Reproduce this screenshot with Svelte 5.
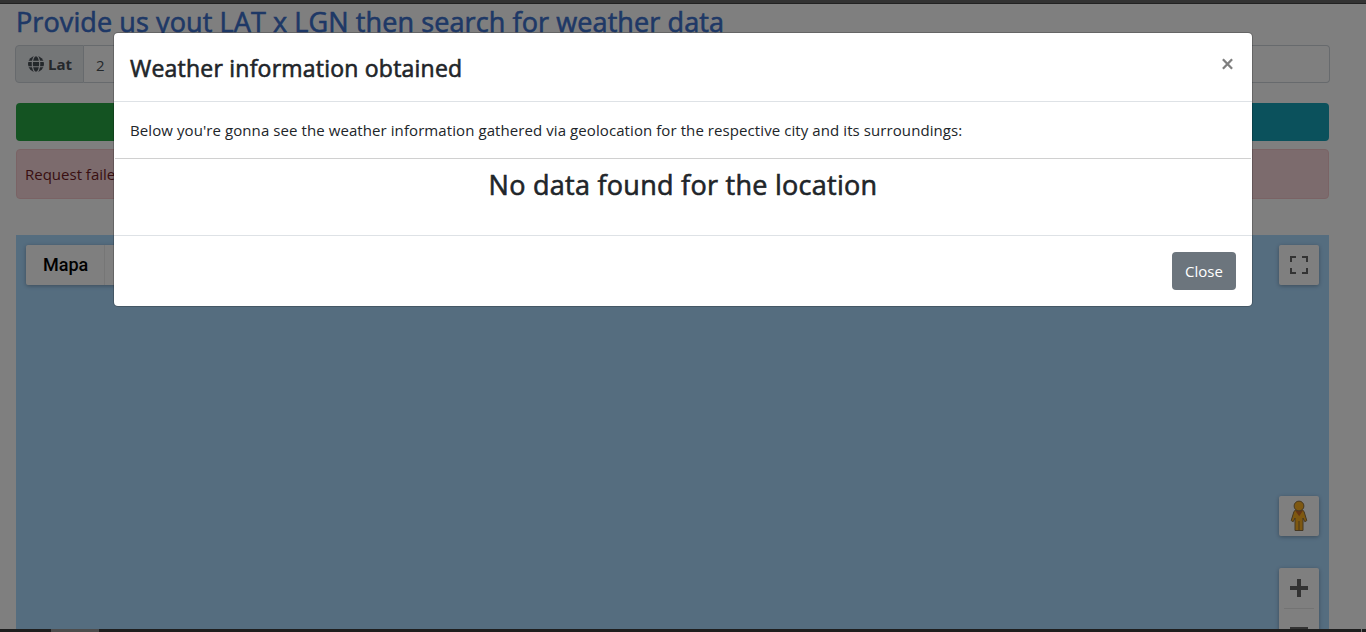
<script>
  const columns = ['search', 'locate'];
</script>

<main class="page">
  <div class="top-edge"></div>
  <section class="content">
    <h1><span>Provide us yout LAT x LGN then search for weather data</span></h1>
    <div class="coords">
      <div class="label">
        <svg width="16" height="16" viewBox="0 0 16 16">
          <circle cx="8" cy="8" r="8" fill="#495057" />
          <g fill="none" stroke="#e9ecef" stroke-width="1.15">
            <ellipse cx="8" cy="8" rx="3.7" ry="8.4" />
            <path d="M0 5.3H16M0 10.7H16" />
          </g>
        </svg>
        <b>Lat</b>
      </div>
      <div class="field"><span>2</span></div>
      <div class="field last"></div>
    </div>
    <div class="actions">
      {#each columns as name}
        <div class="action {name}"></div>
      {/each}
    </div>
    <div class="alert"><span>Request failed</span></div>
    <div class="map">
      <div class="types">
        <div class="type">Mapa</div>
        <div class="type other"></div>
      </div>
      <div class="controls">
        <div class="control">
          <svg width="18" height="18" viewBox="0 0 18 18" fill="#666">
            <path d="M0 0v6h2V2h4V0H0zM16 0h-4v2h4v4h2V0h-2zM16 16h-4v2h6v-6h-2v4zM2 12H0v6h6v-2H2v-4z" />
          </svg>
        </div>
        <div class="control pegman">
          <svg width="18" height="32" viewBox="0 0 18 32">
            <path d="M5 10.2H13L14.2 12 16.8 20.6 14.8 21.7 13 18V30.5H5V18L3.2 21.7 1.2 20.6 3.8 12Z" fill="#fdb022" stroke="#8c7044" stroke-width="1" />
            <path d="M5 10.6H13L9.2 16.3Z" fill="#ce6b28" />
            <path d="M9 21V30.5" stroke="#8c6d38" stroke-width="1" />
            <circle cx="9" cy="6" r="4.9" fill="#fdb022" stroke="#8c7044" stroke-width="1" />
          </svg>
        </div>
        <div class="zoom">
          <div class="half"><svg width="18" height="18" viewBox="0 0 18 18" fill="#666"><path d="M7 0h4v7h7v4h-7v7H7v-7H0V7h7z" /></svg></div>
          <i></i>
          <div class="half"><svg width="18" height="18" viewBox="0 0 18 18" fill="#666"><path d="M0 7h18v4H0z" /></svg></div>
        </div>
      </div>
    </div>
  </section>
  <div class="backdrop">
    <section class="modal">
      <header>
        <h2>Weather information obtained</h2>
        <svg class="dismiss" width="11" height="12" viewBox="0 0 11 12"><path d="M.9 1.2L10.1 10.8M10.1 1.2L.9 10.8" stroke="#7f7f7f" stroke-width="2.3" /></svg>
      </header>
      <p><span>Below you're gonna see the weather information gathered via geolocation for the respective city and its surroundings:</span></p>
      <hr />
      <h3>No data found for the location</h3>
      <footer><button>Close</button></footer>
    </section>
  </div>
  <div class="taskbar"><i class="active"></i><i class="tick"></i></div>
</main>

<style>
  :global(body) { overflow: hidden; }
  * { box-sizing: border-box; }
  .page { position: relative; width: 1366px; height: 632px; overflow: hidden; background: #fff; font-family: "Open Sans", "Noto Sans", sans-serif; font-size: 15px; line-height: 24px; color: #212529; }
  .top-edge { position: absolute; z-index: 3; inset: 0 0 auto; height: 4px; background: #333; border-bottom: 1px solid #222; }
  .content { display: flex; flex-direction: column; padding: 5px 36px 0 15px; height: 100%; }
  h1, h2, h3, p { margin: 0; font-weight: 400; white-space: nowrap; }
  h1, h2, h3 { -webkit-text-stroke: 0.6px currentColor; }
  h1 { flex: none; height: 40px; padding-left: 1px; font-size: 27px; line-height: 34px; letter-spacing: 0.1px; color: #3c70cc; }
  .coords { display: flex; flex: none; width: 1315px; height: 38px; }
  .label { display: flex; align-items: center; gap: 4px; width: 69px; padding-left: 12px; border: 1px solid #ced4da; border-radius: 4px 0 0 4px; background: #e9ecef; color: #495057; }
  .field { flex: 1; border: 1px solid #ced4da; border-left: 0; padding: 7px 12px; color: #495057; }
  .last { border-radius: 0 4px 4px 0; }
  .actions { display: flex; flex: none; margin: 20px 0 0 1px; width: 1313px; }
  .action { flex: 1; height: 38px; border-radius: 4px; }
  .search { background: #28a745; }
  .locate { background: #17a2b8; }
  .alert { flex: none; width: 1313px; height: 50px; margin: 8px 0 36px 1px; padding: 12px 8px; border: 1px solid #f5c6cb; border-radius: 4px; background: #f8d7da; color: #721c24; }
  .map { display: flex; flex: 1; justify-content: space-between; width: 1313px; margin-left: 1px; padding: 10px; background: #aadaff; }
  .types { display: flex; width: 180px; height: 40px; background: #fff; border-radius: 2px; box-shadow: 0 1px 4px #0000004d; }
  .type { width: 78px; padding-left: 17px; font: 500 18px/40px Roboto, sans-serif; color: #000; }
  .other { border-left: 1px solid #ececec; }
  .controls { display: flex; flex-direction: column; width: 40px; }
  .control { display: flex; flex: none; align-items: center; justify-content: center; width: 40px; height: 40px; background: #fff; border-radius: 2px; box-shadow: 0 1px 4px #0000004d; }
  .pegman { margin-top: 211px; }
  .zoom { flex: none; height: 81px; margin-top: 32px; background: #fff; border-radius: 2px; box-shadow: 0 1px 4px #0000004d; }
  .zoom i { display: block; height: 1px; margin: 0 5px; background: #e6e6e6; }
  .half { display: flex; align-items: center; justify-content: center; height: 40px; }
  .backdrop { position: absolute; z-index: 1; inset: 0; display: flex; align-items: flex-start; justify-content: center; padding-top: 32px; background: #00000080; }
  .modal { width: 1140px; height: 275px; background: #fff; background-clip: padding-box; border: 1px solid #0003; border-radius: 5px; }
  header { display: flex; justify-content: space-between; height: 69px; padding: 16px 19px 0 16px; border-bottom: 1px solid #dee2e6; }
  h2 { padding-top: 1px; font-size: 23px; line-height: 36px; letter-spacing: 0.22px; }
  .dismiss { margin-top: 9px; }
  p { height: 56px; padding: 16px 16px; letter-spacing: 0.083px; }
  hr { height: 1px; margin: 0 1px; border: 0; background: #d0d0d0; }
  h3 { height: 76px; padding-top: 9px; text-align: center; font-size: 27px; line-height: 34px; letter-spacing: 0.27px; }
  footer { display: flex; justify-content: flex-end; height: 71px; padding: 16px; border-top: 1px solid #dee2e6; }
  button { width: 64px; height: 38px; padding: 0; border: 0; border-radius: 4px; background: #6c757d; color: #fff; font: inherit; }
  .taskbar { position: absolute; z-index: 3; inset: auto 0 0; display: flex; justify-content: space-between; height: 3px; padding: 0 4px 0 51px; background: #1e1e1e; }
  .active { width: 48px; background: #4c4c4c; }
  .tick { width: 1px; background: #777; }
</style>
